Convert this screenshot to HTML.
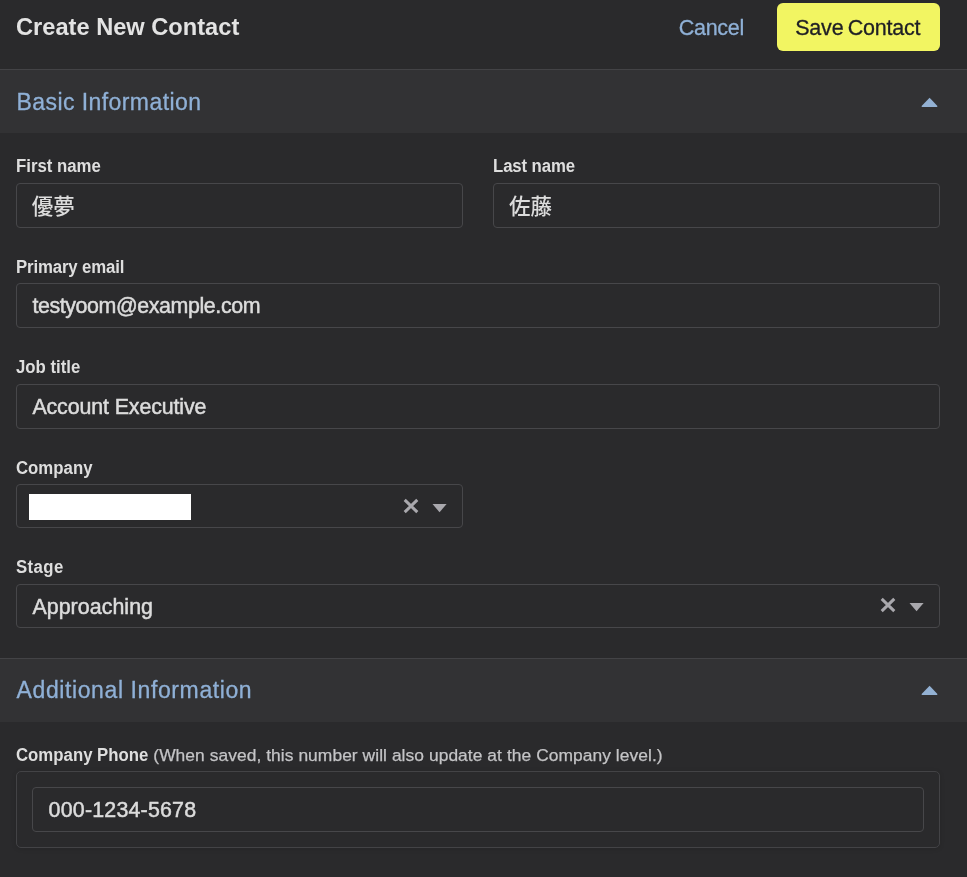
<!DOCTYPE html>
<html lang="en">
<head>
<meta charset="utf-8">
<title>Create New Contact</title>
<style>
*{box-sizing:border-box;margin:0;padding:0}
html,body{width:967px;height:877px;overflow:hidden;background:#2a2a2c}
body{position:relative;font-family:"Liberation Sans",sans-serif;color:#dcdcdc}
#w{position:absolute;left:0;top:0;width:967px;height:877px;will-change:transform}
.abs{position:absolute;white-space:nowrap;line-height:1}
.title{left:16.3px;top:15px;font-size:24.4px;font-weight:bold;color:#e3e3e3;transform:scaleX(.969);transform-origin:0 0}
.cancel{left:678.8px;top:18px;font-size:21.5px;letter-spacing:-.3px;color:#8fb0d6;-webkit-text-stroke:.3px #8fb0d6}
.save{left:777px;top:3px;width:163px;height:48px;border-radius:6px;background:#f2f562}
.savet{left:795.2px;top:18px;font-size:21.5px;letter-spacing:-.2px;word-spacing:-1.5px;color:#1f1f25;-webkit-text-stroke:.3px #1f1f25}
.hline{left:0;width:967px;height:1px;background:#434346}
.sec{left:0;width:967px;height:63px;background:#323234}
.sech{left:16.6px;font-size:23px;color:#8fb0d6;-webkit-text-stroke:.3px #8fb0d6}
.lbl{font-size:18.3px;font-weight:bold;color:#dedede;transform:scaleX(.918);transform-origin:0 0}
.inp{border:1px solid #47474a;border-radius:4px;background:#2a2a2c}
.val{font-size:21.4px;color:#dcdcdc;-webkit-text-stroke:.5px #dcdcdc}
.cjk{position:absolute}
svg.ic{position:absolute;overflow:visible}
</style>
</head>
<body>
<div id="w">
<div class="abs title">Create New Contact</div>
<div class="abs cancel">Cancel</div>
<div class="abs save"></div>
<div class="abs savet">Save Contact</div>
<div class="abs hline" style="top:69px"></div>

<div class="abs sec" style="top:70px"></div>
<div class="abs sech" style="top:91px;letter-spacing:.42px">Basic Information</div>
<svg class="ic" style="left:921px;top:97px" width="17" height="10" viewBox="0 0 17 10"><path d="M8.6 0.7 L16.4 9 Q16.6 10 15.8 10 L1.2 10 Q0.4 10 0.6 9 Z" fill="#93b1d3"/></svg>

<div class="abs lbl" style="left:16.4px;top:157px">First name</div>
<div class="abs inp" style="left:16px;top:183px;width:447px;height:45px"></div>
<svg class="cjk" role="img" aria-label="優夢" style="left:30px;top:193px" width="46" height="26" viewBox="30 193 46 26"><text x="31.8" y="214.2" font-size="21.5" font-weight="500" fill="#dcdcdc" font-family="&quot;Liberation Sans&quot;, &quot;Noto Sans CJK JP&quot;, sans-serif">優夢</text></svg>
<div class="abs lbl" style="left:493.4px;top:157px;letter-spacing:-.12px">Last name</div>
<div class="abs inp" style="left:493px;top:183px;width:447px;height:45px"></div>
<svg class="cjk" role="img" aria-label="佐藤" style="left:507px;top:193px" width="46" height="26" viewBox="507 193 46 26"><text x="508.9" y="214.2" font-size="21.5" font-weight="500" fill="#dcdcdc" font-family="&quot;Liberation Sans&quot;, &quot;Noto Sans CJK JP&quot;, sans-serif">佐藤</text></svg>

<div class="abs lbl" style="left:16.4px;top:258px;letter-spacing:-.15px">Primary email</div>
<div class="abs inp" style="left:16px;top:283px;width:924px;height:45px"></div>
<div class="abs val" style="left:32.4px;top:296px;letter-spacing:-.4px">testyoom@example.com</div>

<div class="abs lbl" style="left:16.4px;top:358px">Job title</div>
<div class="abs inp" style="left:16px;top:384px;width:924px;height:45px"></div>
<div class="abs val" style="left:32.4px;top:397px;letter-spacing:-.12px">Account Executive</div>

<div class="abs lbl" style="left:16.4px;top:459px">Company</div>
<div class="abs inp" style="left:16px;top:484px;width:447px;height:44px"></div>
<div class="abs" style="left:29px;top:494px;width:162px;height:26px;background:#fff"></div>
<svg class="ic" style="left:403px;top:498px" width="16" height="16" viewBox="0 0 16 16"><path d="M1.7 1.88 L14.3 14.14 M14.3 1.88 L1.7 14.14" stroke="#a9a8ad" stroke-width="3" fill="none"/></svg>
<svg class="ic" style="left:432px;top:503px" width="15" height="10" viewBox="0 0 15 10"><path d="M0.5 1 L14.6 1 L7.55 9.3 Z" fill="#a9a8ad"/></svg>

<div class="abs lbl" style="left:16.2px;top:558px;letter-spacing:.45px">Stage</div>
<div class="abs inp" style="left:16px;top:584px;width:924px;height:44px"></div>
<div class="abs val" style="left:32.4px;top:597px;letter-spacing:.05px">Approaching</div>
<svg class="ic" style="left:880px;top:597px" width="16" height="16" viewBox="0 0 16 16"><path d="M1.7 1.88 L14.3 14.14 M14.3 1.88 L1.7 14.14" stroke="#a9a8ad" stroke-width="3" fill="none"/></svg>
<svg class="ic" style="left:909px;top:602px" width="15" height="10" viewBox="0 0 15 10"><path d="M0.5 1 L14.6 1 L7.55 9.3 Z" fill="#a9a8ad"/></svg>

<div class="abs hline" style="top:658px"></div>
<div class="abs sec" style="top:659px"></div>
<div class="abs sech" style="top:679px;letter-spacing:.6px">Additional Information</div>
<svg class="ic" style="left:921px;top:685px" width="17" height="10" viewBox="0 0 17 10"><path d="M8.6 0.7 L16.4 9 Q16.6 10 15.8 10 L1.2 10 Q0.4 10 0.6 9 Z" fill="#93b1d3"/></svg>

<div class="abs lbl" style="left:16.2px;top:746px">Company Phone</div>
<div class="abs" style="left:153.3px;top:747px;font-size:17.4px;color:#c4c4c6;letter-spacing:.06px;-webkit-text-stroke:.25px #c4c4c6">(When saved, this number will also update at the Company level.)</div>
<div class="abs" style="left:16px;top:771px;width:924px;height:77px;border:1px solid #434346;border-radius:5px;box-shadow:0 1px 5px rgba(0,0,0,.12)"></div>
<div class="abs inp" style="left:32px;top:787px;width:892px;height:45px"></div>
<div class="abs val" style="left:48.6px;top:800px;letter-spacing:.2px">000-1234-5678</div>
</div>
</body>
</html>
